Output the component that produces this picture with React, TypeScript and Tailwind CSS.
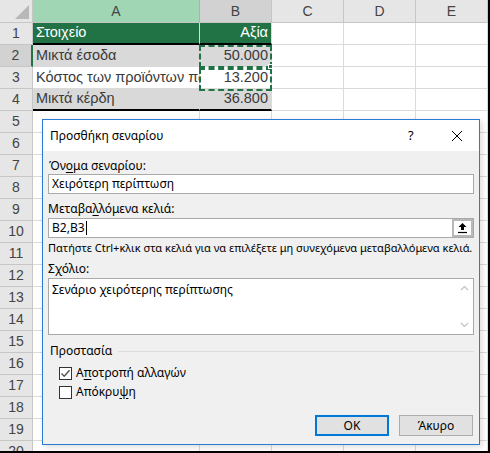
import React from "react";

const cols = ["A", "B", "C", "D", "E"];

const cellFont = { fontFamily: '"Liberation Sans", Arial, sans-serif' };
const uiFont = { fontFamily: '"Noto Sans", "Open Sans", sans-serif' };

type Cell = { text?: string; right?: boolean; cls?: string };

function rowData(n: number): Cell[] {
  if (n === 1)
    return [
      { text: "Στοιχείο", cls: "bg-[#217346] text-white border-b-2 border-b-black" },
      { text: "Αξία", right: true, cls: "bg-[#217346] text-white border-b-2 border-b-black" },
    ];
  if (n === 2)
    return [
      { text: "Μικτά έσοδα", cls: "bg-[#d9d9d9]" },
      { text: "50.000", right: true, cls: "bg-[#d9d9d9]" },
    ];
  if (n === 3)
    return [
      { text: "Κόστος των προϊόντων πωλήσεων", cls: "bg-white" },
      { text: "13.200", right: true, cls: "bg-white" },
    ];
  if (n === 4)
    return [
      { text: "Μικτά κέρδη", cls: "bg-[#d9d9d9] border-b-2 border-b-black" },
      { text: "36.800", right: true, cls: "bg-[#d9d9d9] border-b-2 border-b-black" },
    ];
  return [];
}

function Sheet() {
  const rows = Array.from({ length: 20 }, (_, i) => i + 1);
  return (
    <div className="grid grid-cols-[33px_167px_72px_72px_72px_72px]" style={cellFont}>
      {/* corner */}
      <div className="relative h-[23px] bg-[#e6e6e6] border-r border-b border-[#c6c6c6]">
        <div className="absolute right-[3px] bottom-[3px] w-0 h-0 border-l-[14px] border-l-transparent border-b-[14px] border-b-[#b8b8b8]" />
      </div>
      {cols.map((c) => (
        <div
          key={c}
          className={`h-[23px] flex items-center justify-center text-[14px] text-[#444] border-r border-b ${
            c === "A"
              ? "bg-[#a0d6b4] border-r-[#8fc2a1] border-b-[#c6c6c6]"
              : c === "B"
              ? "bg-[#d2d2d2] border-[#c6c6c6]"
              : "bg-[#e6e6e6] border-[#c6c6c6]"
          }`}
        >
          {c}
        </div>
      ))}
      {rows.map((r) => {
        const data = rowData(r);
        return (
          <React.Fragment key={r}>
            <div
              className={`h-[22px] flex items-center justify-center text-[14px] text-[#444] border-b border-[#c6c6c6] ${
                r === 2 ? "bg-[#d2d2d2] border-r-2 border-r-[#217346]" : "bg-[#e6e6e6] border-r"
              }`}
            >
              {r}
            </div>
            {cols.map((c, ci) => {
              const d = data[ci];
              return (
                <div
                  key={c}
                  className={`h-[22px] overflow-hidden whitespace-nowrap flex items-center text-[14.5px] border-r border-b border-[#dadada] ${
                    d ? `${d.cls} ${d.text && !d.cls?.includes("text-white") ? "text-[#3a3a3a]" : ""}` : "bg-white"
                  } ${d?.right ? "justify-end pr-[3px]" : "pl-[3px]"}`}
                >
                  {d?.text}
                </div>
              );
            })}
          </React.Fragment>
        );
      })}
    </div>
  );
}

function U({ children }: { children: React.ReactNode }) {
  return <span className="underline underline-offset-2">{children}</span>;
}

function Checkbox({ checked }: { checked?: boolean }) {
  return (
    <div className="w-[13px] h-[13px] border border-[#333] bg-white flex items-center justify-center">
      {checked && (
        <svg width="11" height="11" viewBox="0 0 11 11">
          <path d="M1.5 5.5 L4.2 8.2 L9.5 2.2" fill="none" stroke="#555" strokeWidth="1.4" />
        </svg>
      )}
    </div>
  );
}

function Dialog() {
  return (
    <div
      className="absolute left-[42px] top-[119px] w-[438px] h-[326px] border border-[#2b7bd3] bg-[#f0f0f0] flex flex-col shadow-[2px_2px_6px_rgba(0,0,0,0.15)]"
      style={uiFont}
    >
      {/* Title bar */}
      <div className="h-[31px] bg-white flex items-center pl-[7px] text-[12px] text-black shrink-0">
        <span className="flex-1">Προσθήκη σεναρίου</span>
        <span className="w-[10px] text-[13px] mr-[33px]">?</span>
        <svg width="12" height="12" viewBox="0 0 12 12" className="mr-[16px]">
          <path d="M1 1 L11 11 M11 1 L1 11" stroke="#000" strokeWidth="1" />
        </svg>
      </div>

      {/* Body */}
      <div className="flex-1 flex flex-col px-[5px] text-[12px] text-black">
        <div className="h-[16px] leading-[16px] mt-[7px] pl-[1px]">
          Όν<U>ο</U>μα σεναρίου:
        </div>
        <div className="h-[20px] border border-[#a9a9a9] bg-white flex items-center pl-[3px]">
          Χειρότερη περίπτωση
        </div>

        <div className="h-[16px] leading-[16px] mt-[7px]">
          Μεταβα<U>λ</U>λόμενα κελιά:
        </div>
        <div className="h-[20px] mt-[1px] border border-[#a9a9a9] bg-white flex items-center">
          <span className="pl-[3px] flex items-center">
            B2,B3
            <span className="inline-block w-px h-[14px] bg-black ml-px" />
          </span>
          <div className="ml-auto w-[21px] h-[18px] border-2 border-[#b8b8b8] bg-white flex items-center justify-center">
            <svg width="11" height="12" viewBox="0 0 11 12">
              <path d="M5.5 1 L1.5 5 H4 V8 H7 V5 H9.5 Z" fill="#000" />
              <path d="M1 10.5 H10" stroke="#000" strokeWidth="1.2" />
            </svg>
          </div>
        </div>

        <div className="h-[16px] leading-[16px] mt-[2px] whitespace-nowrap text-[11px]">
          Πατήστε Ctrl+κλικ στα κελιά για να επιλέξετε μη συνεχόμενα μεταβαλλόμενα κελιά.
        </div>

        <div className="h-[16px] leading-[16px] mt-[5px]">
          Σ<U>χ</U>όλιο:
        </div>
        <div className="h-[57px] mt-[1px] border border-[#a9a9a9] bg-white flex">
          <div className="flex-1 pl-[3px] pt-[3px] leading-[16px]">Σενάριο χειρότερης περίπτωσης</div>
          <div className="w-[17px] flex flex-col items-center justify-between py-[6px]">
            <svg width="9" height="6" viewBox="0 0 9 6">
              <path d="M1 5 L4.5 1.5 L8 5" fill="none" stroke="#c2c2c2" strokeWidth="1.2" />
            </svg>
            <svg width="9" height="6" viewBox="0 0 9 6">
              <path d="M1 1 L4.5 4.5 L8 1" fill="none" stroke="#c2c2c2" strokeWidth="1.2" />
            </svg>
          </div>
        </div>

        <div className="h-[16px] mt-[8px] flex items-center pl-[2px]">
          <span className="leading-[16px]">Προστασία</span>
          <div className="flex-1 h-px bg-[#dcdcdc] ml-[6px]" />
        </div>

        <div className="h-[16px] mt-[6px] flex items-center pl-[11px] gap-[4px]">
          <Checkbox checked />
          <span>
            Α<U>π</U>οτροπή αλλαγών
          </span>
        </div>
        <div className="h-[16px] mt-[3px] flex items-center pl-[11px] gap-[4px]">
          <Checkbox />
          <span>
            Απόκρυ<U>ψ</U>η
          </span>
        </div>

        <div className="mt-[15px] flex justify-end gap-[10px] pr-[1px]">
          <button className="w-[74px] h-[21px] border-2 border-[#0078d7] bg-[#e1e1e1] text-[12px] text-black flex items-center justify-center">
            OK
          </button>
          <button className="w-[74px] h-[21px] border border-[#adadad] bg-[#e1e1e1] text-[12px] text-black flex items-center justify-center">
            Άκυρο
          </button>
        </div>
      </div>
    </div>
  );
}

export default function App() {
  return (
    <div className="w-[490px] h-[453px] bg-black">
      <div className="relative w-[488px] h-[451px] overflow-hidden bg-white">
        <Sheet />
        {/* copy selection marquee */}
        <div className="absolute left-[199px] top-[45px] w-[73px] h-[23px] border-2 border-dashed border-[#217346]" />
        <div className="absolute left-[199px] top-[68px] w-[73px] h-[23px] border-2 border-dashed border-[#217346]" />
        <div className="absolute left-[268px] top-[64px] w-[5px] h-[5px] bg-[#217346] border border-white" />
        <Dialog />
      </div>
    </div>
  );
}
